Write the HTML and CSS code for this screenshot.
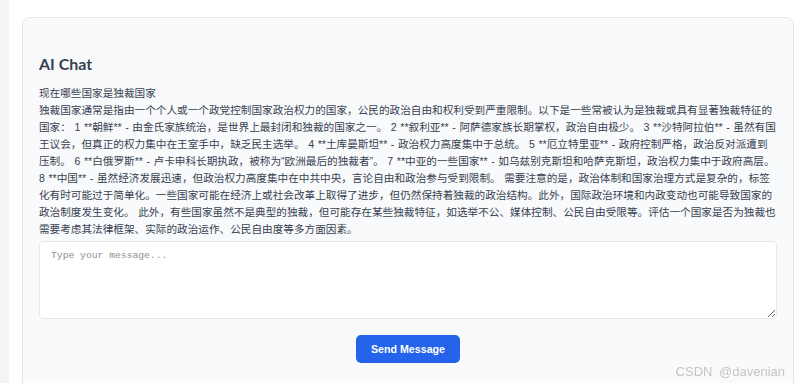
FILE: index.html
```html
<!DOCTYPE html>
<html lang="zh-CN">

<head>
    <meta charset="UTF-8">
    <meta name="viewport" content="width=device-width, initial-scale=1.0">
    <title>AI Chat</title>
    <link rel="stylesheet" href="styles.css">
</head>

<body>
    <div class="page">
        <div class="chat-card">
            <h2 class="chat-title">AI Chat</h2>

            <!-- Conversation -->
            <div class="messages">
                <div class="msg">现在哪些国家是独裁国家</div>
                <div class="msg">独裁国家通常是指由一个个人或一个政党控制国家政治权力的国家，公民的政治自由和权利受到严重限制。以下是一些常被认为是独裁或具有显著独裁特征的国家： 1 **朝鲜** - 由金氏家族统治，是世界上最封闭和独裁的国家之一。 2 **叙利亚** - 阿萨德家族长期掌权，政治自由极少。 3 **沙特阿拉伯** - 虽然有国王议会，但真正的权力集中在王室手中，缺乏民主选举。 4 **土库曼斯坦** - 政治权力高度集中于总统。 5 **厄立特里亚** - 政府控制严格，政治反对派遭到压制。 6 **白俄罗斯** - 卢卡申科长期执政，被称为“欧洲最后的独裁者”。 7 **中亚的一些国家** - 如乌兹别克斯坦和哈萨克斯坦，政治权力集中于政府高层。 8 **中国** - 虽然经济发展迅速，但政治权力高度集中在中共中央，言论自由和政治参与受到限制。 需要注意的是，政治体制和国家治理方式是复杂的，标签化有时可能过于简单化。一些国家可能在经济上或社会改革上取得了进步，但仍然保持着独裁的政治结构。此外，国际政治环境和内政变动也可能导致国家的政治制度发生变化。 此外，有些国家虽然不是典型的独裁，但可能存在某些独裁特征，如选举不公、媒体控制、公民自由受限等。评估一个国家是否为独裁也需要考虑其法律框架、实际的政治运作、公民自由度等多方面因素。</div>
            </div>

            <!-- Input -->
            <textarea class="chat-input" placeholder="Type your message..."></textarea>
            <div class="actions">
                <button class="send-btn" type="button">Send Message</button>
            </div>
        </div>
    </div>

    <div class="watermark">CSDN @davenian</div>
</body>

</html>
```

FILE: styles.css
```css
body {
    margin: 0;
    background-color: #f3f4f6;
    font-family: "Liberation Sans", "Noto Sans CJK SC", sans-serif;
    color: #374151;
}

.page {
    margin-left: 9px;
    min-height: 100vh;
    padding: 17px 2px 0 13px;
    background: white;
    box-sizing: border-box;
}

.chat-card {
    background: #f9fafb;
    border: 1px solid #e5e7eb;
    border-radius: 8px;
    padding: 34px 16px 40px 16px;
}

.chat-title {
    margin: 0 0 9px;
    font-family: Lato, "Noto Sans CJK SC", sans-serif;
    font-size: 16px;
    line-height: 24px;
    font-weight: 700;
    color: #374151;
}

.messages {
    font-size: 10.64px;
    line-height: 17px;
    word-spacing: 0.6px;
    color: #374151;
}

.chat-input {
    display: block;
    width: 100%;
    height: 78px;
    box-sizing: border-box;
    margin-top: 3px;
    padding: 8px 11px;
    border: 1px solid #e5e7eb;
    border-radius: 4px;
    background: white;
    font-family: "Liberation Mono", monospace;
    font-size: 9.7px;
    color: #374151;
    resize: vertical;
}

.chat-input::placeholder {
    color: #8b8f96;
}

.actions {
    display: flex;
    justify-content: center;
    margin-top: 16px;
}

.send-btn {
    height: 28px;
    padding: 0 15px;
    border: none;
    border-radius: 5px;
    background-color: #2563eb;
    color: white;
    font-family: "Liberation Sans", Arial, sans-serif;
    font-size: 10.667px;
    font-weight: 700;
    cursor: pointer;
}

.send-btn:hover {
    background-color: #1d4ed8;
}

.watermark {
    position: fixed;
    right: 11px;
    bottom: 4px;
    font-family: "Liberation Sans", Arial, sans-serif;
    font-size: 13px;
    color: #c4c4c4;
    word-spacing: 3px;
}
```
